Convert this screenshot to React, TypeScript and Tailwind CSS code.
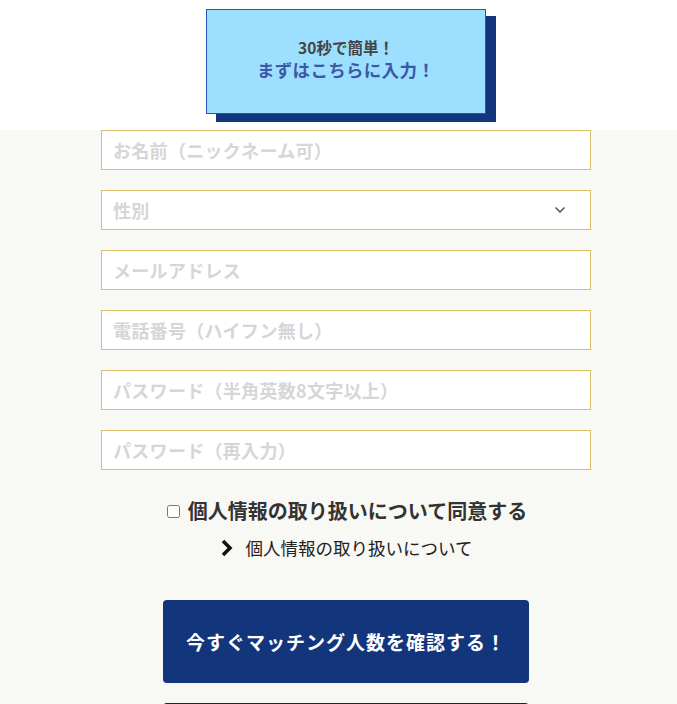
import { ChevronDown } from "lucide-react";

const fields = [
  "お名前（ニックネーム可）",
  "性別",
  "メールアドレス",
  "電話番号（ハイフン無し）",
  "パスワード（半角英数8文字以上）",
  "パスワード（再入力）",
];

export default function App() {
  return (
    <div className="min-h-[704px] bg-[#f8f8f4] font-['Noto_Sans_CJK_JP',sans-serif] pl-[15px]">
      {/* header with banner */}
      <div className="h-[130px] bg-white -ml-[15px] pl-[15px] flex justify-center pt-[9px]">
        <div className="relative w-[280px] h-[113px]">
          <div className="absolute left-[10px] top-[7px] w-[280px] h-[106px] bg-[#12357d]" />
          <div className="absolute left-0 top-0 w-[280px] h-[105px] bg-[#9ddfff] border border-[#2159b8] flex flex-col items-center justify-center pb-[6px]">
            <p className="text-[15.5px] font-bold text-[#444] leading-[22px]">30秒で簡単！</p>
            <p className="text-[17.5px] font-bold text-[#3d58a6] leading-[24px] tracking-[0.3px]">まずはこちらに入力！</p>
          </div>
        </div>
      </div>

      <div className="flex flex-col items-center">
        <div className="w-[490px] flex flex-col gap-5">
          {fields.map((f, i) => (
            <div
              key={f}
              className="h-10 bg-white border border-[#dcbf6a] flex items-center justify-between pl-[11px] pr-[22px]"
            >
              <span className="text-[18px] font-bold text-[#d6d6d6] tracking-[0.3px]">{f}</span>
              {i === 1 && <ChevronDown className="w-[16px] h-[16px] text-[#555]" strokeWidth={2.5} />}
            </div>
          ))}
        </div>

        <label className="mt-[26px] flex items-center gap-[8px] text-[20px] font-bold text-[#333] pl-[2px]">
          <input type="checkbox" className="w-[13px] h-[13px]" />
          個人情報の取り扱いについて同意する
        </label>

        <div className="mt-[9px] flex items-center gap-[10px] text-[17.5px] text-[#222]">
          <svg width="16" height="18" viewBox="0 0 16 18">
            <path d="M3 2 L10 9 L3 16" fill="none" stroke="#111" strokeWidth="3.5" />
          </svg>
          個人情報の取り扱いについて
        </div>

        <button className="mt-[39px] w-[366px] h-[83px] bg-[#13357c] rounded-[4px] text-white text-[19px] font-bold tracking-[1px]">
          今すぐマッチング人数を確認する！
        </button>

        <div className="mt-[20px] w-[366px] h-[20px] bg-[#222] rounded-t-[4px]" />
      </div>
    </div>
  );
}
